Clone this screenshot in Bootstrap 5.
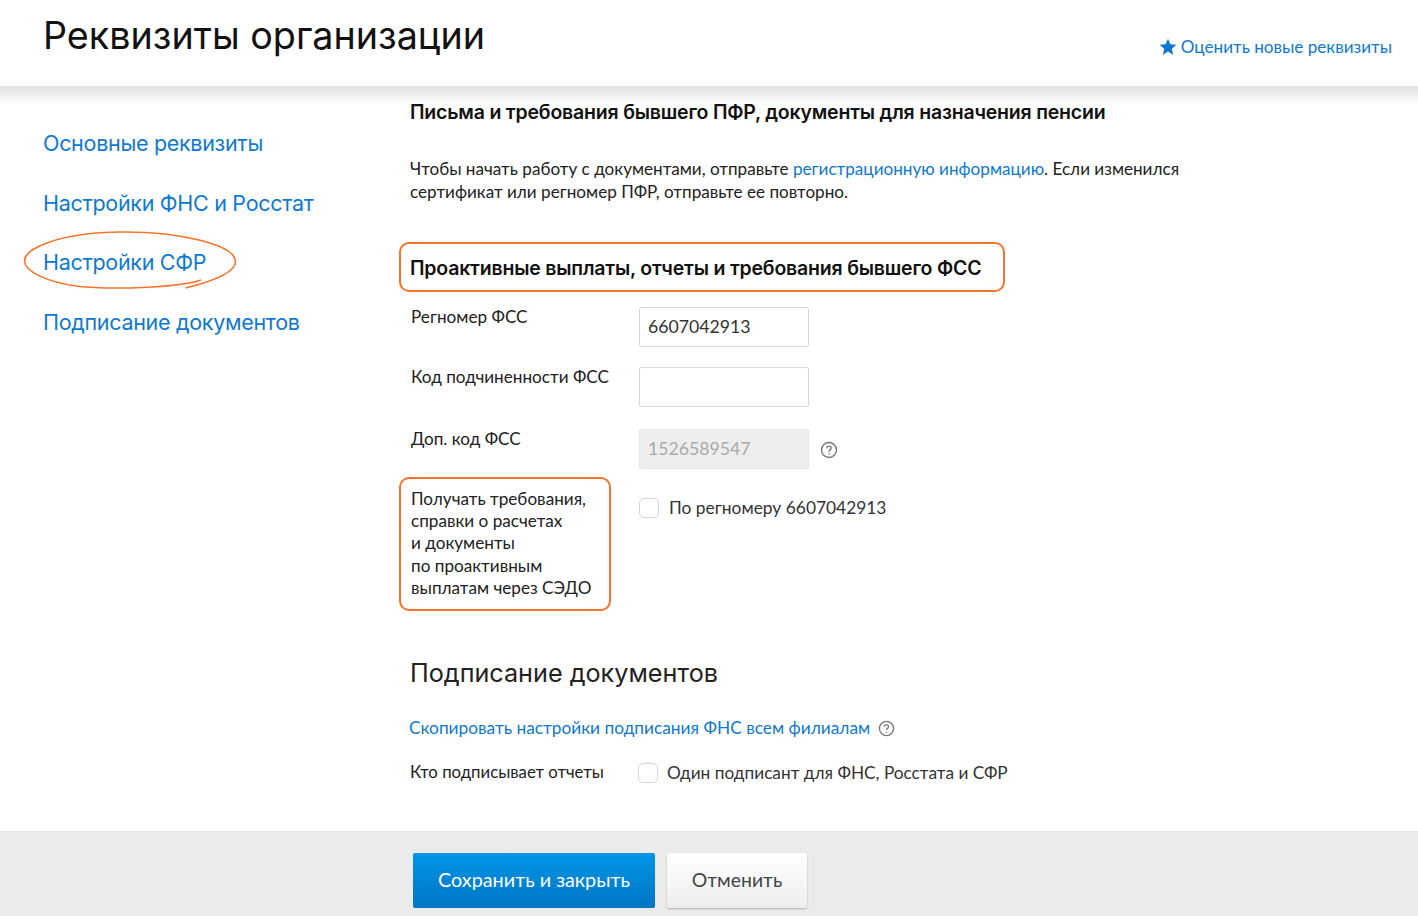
<!DOCTYPE html>
<html lang="ru">
<head>
  <meta charset="UTF-8" />
  <meta name="viewport" content="width=device-width, initial-scale=1.0"/>
  <title>Реквизиты организации</title>
  <link rel="stylesheet" href="https://cdn.jsdelivr.net/npm/bootstrap@5.3.0/dist/css/bootstrap.min.css" />
  <style>
    html, body { height: 916px; overflow: hidden; }
    body { background: #fff; font-family: "Lato", "Noto Sans", sans-serif; color: #222; font-size: 17px; position: relative; }
    a { color: #0f79cf; text-decoration: none; }
    .page-head { height: 86px; padding: 10px 26px 0 43px; position: relative; z-index: 2; }
    .page-head h1 { font-family: "Inter", sans-serif; font-weight: 400; font-size: 37.7px; line-height: 50px; color: #111; margin: 0; }
    .rate-link { font-size: 17.1px; padding-top: 24px; }
    .head-shade { height: 19px; background: linear-gradient(#e2e2e2, #fff); }
    .side-col { width: 410px; padding: 23px 0 0 43px; flex: none; }
    .side-link { display: block; font-family: "Inter", sans-serif; font-size: 21.5px; line-height: 30px; margin-bottom: 29.5px; letter-spacing: -.3px; position: relative; }
    .side-mark { position: absolute; left: -20px; top: -16px; }
    .main-col { width: 800px; margin-top: -6px; }
    .sec-title { font-family: "Inter", sans-serif; font-weight: 600; font-size: 19.5px; line-height: 26px; color: #111; letter-spacing: -.2px; }
    .intro { font-size: 17.13px; line-height: 23px; margin: 32px 0 0; }
    .hl-box { border: 2px solid #f6742b; border-radius: 10px; position: absolute; pointer-events: none; }
    .fss-title { margin-top: 52px; margin-bottom: 26px; position: relative; }
    .fss-title .hl-box { left: -11px; top: -13px; width: 606px; height: 50px; }
    .form-line { display: flex; margin-bottom: 21px; }
    .form-line.first-line { margin-bottom: 20px; }
    .form-line.second-line { margin-bottom: 22px; }
    .form-lbl { width: 229px; flex: none; line-height: 20px; padding-left: 1px; font-size: 17.15px; }
    .val-input { width: 170px; height: 40px; border: 1px solid #d9d9d9; border-radius: 2px; padding: 0 8px 2px; font-size: 17.7px; color: #333; font-family: inherit; background: #fff; }
    .val-input:disabled { background: #eee; color: #aaa; border-color: #e6e6e6; }
    .hint-ic { margin-left: 11px; margin-top: 12px; flex: none; }
    .check-line { display: flex; align-items: center; gap: 10px; font-size: 17.36px; color: #333; line-height: 22px; }
    .check-box { width: 20px; height: 20px; border: 1px solid #d5d5d5; border-radius: 5px; background: #fff; flex: none; }
    .sedo-lbl { line-height: 22.2px; position: relative; margin-top: -2px; }
    .sedo-lbl .hl-box { left: -11px; top: -11px; width: 212px; height: 134px; }
    .sedo-check { padding-top: 7px; }
    .sign-title { font-family: "Inter", sans-serif; font-size: 25.2px; font-weight: 400; line-height: 34px; color: #222; margin: 57px 0 26px; }
    .copy-line { margin-left: -1px; font-size: 17.3px; line-height: 24px; display: flex; }
    .who-line { margin-top: 20px; display: flex; font-size: 16.75px; }
    .who-lbl { width: 228px; flex: none; line-height: 24px; }
    .who-line .check-line { font-size: 17.24px; gap: 9px; padding-top: 2px; }
    .cut-line { margin-top: 41px; font-size: 17px; }
    .page-foot { position: absolute; left: 0; right: 0; bottom: 0; height: 85px; background: #ebebeb; padding: 22px 0 0 413px; gap: 12px; z-index: 3; }
    .btn-save, .btn-undo { height: 55px; border-radius: 2px; padding: 0 0 2px; }
    .btn-save { width: 242px; font-size: 19.8px; color: #fff; background: linear-gradient(#0096e6, #0076c4); border: 0; }
    .btn-undo { width: 140px; font-size: 19.4px; color: #444; background: linear-gradient(#fff, #eee); border: 0; box-shadow: 0 1px 2px rgba(0,0,0,.25); }
  </style>
</head>
<body>
  <header class="page-head d-flex justify-content-between bg-white">
    <h1>Реквизиты организации</h1>
    <a href="#" class="rate-link d-flex align-items-start gap-1">
      <svg width="18" height="18" viewBox="0 0 24 24" class="mt-1" fill="#0f79cf"><path d="M12 1l3.2 7.4 8 .7-6.1 5.3 1.8 7.9L12 18.1l-6.9 4.2 1.8-7.9L.8 9.1l8-.7z"/></svg>
      Оценить новые реквизиты
    </a>
  </header>
  <div class="head-shade"></div>

  <div class="d-flex">
    <!-- left menu -->
    <nav class="side-col">
      <a href="#" class="side-link">Основные реквизиты</a>
      <a href="#" class="side-link">Настройки ФНС и Росстат</a>
      <a href="#" class="side-link">Настройки СФР
        <svg class="side-mark" width="216" height="62" viewBox="0 0 216 62" fill="none" stroke="#f6742b" stroke-width="1.6"><path d="M178 49c-25 8-90 10-125 6C25 51 2 41 1.500 30 1 18 35 1.500 98 1c60-.5 113 13 114.500 29 1 11-22 20-50 27"/></svg>
      </a>
      <a href="#" class="side-link">Подписание документов</a>
    </nav>

    <!-- form -->
    <main class="main-col">
      <div class="sec-title">Письма и требования бывшего ПФР, документы для назначения пенсии</div>
      <p class="intro">Чтобы начать работу с документами, отправьте <a href="#">регистрационную информацию</a>. Если изменился<br>сертификат или регномер ПФР, отправьте ее повторно.</p>

      <div class="sec-title fss-title">Проактивные выплаты, отчеты и требования бывшего ФСС<span class="hl-box"></span></div>

      <div class="form-line first-line">
        <div class="form-lbl">Регномер ФСС</div>
        <input class="val-input" value="6607042913">
      </div>
      <div class="form-line second-line">
        <div class="form-lbl">Код подчиненности ФСС</div>
        <input class="val-input">
      </div>
      <div class="form-line">
        <div class="form-lbl">Доп. код ФСС</div>
        <input class="val-input" value="1526589547" disabled>
        <svg class="hint-ic" width="18" height="18" viewBox="0 0 18 18" fill="none" stroke="#777" stroke-width="1.400"><circle cx="9" cy="9" r="7.500"/><path d="M6.800 7.200c0-1.300 1-2.100 2.200-2.100s2.200.8 2.200 2c0 1.800-2.200 1.700-2.200 3.600"/><path d="M9 12.200v1.400"/></svg>
      </div>
      <div class="form-line">
        <div class="form-lbl sedo-lbl">Получать требования,<br>справки о расчетах<br>и документы<br>по проактивным<br>выплатам через СЭДО<span class="hl-box"></span></div>
        <label class="check-line align-self-start sedo-check"><span class="check-box"></span>По регномеру 6607042913</label>
      </div>

      <h2 class="sign-title">Подписание документов</h2>
      <div class="copy-line"><a href="#">Скопировать настройки подписания ФНС всем филиалам</a>
        <svg class="ms-2 mt-1" width="17" height="17" viewBox="0 0 18 18" fill="none" stroke="#777" stroke-width="1.400"><circle cx="9" cy="9" r="7.500"/><path d="M6.800 7.200c0-1.300 1-2.100 2.200-2.100s2.200.8 2.200 2c0 1.800-2.200 1.700-2.200 3.600"/><path d="M9 12.200v1.400"/></svg>
      </div>
      <div class="who-line">
        <div class="who-lbl">Кто подписывает отчеты</div>
        <label class="check-line"><span class="check-box"></span>Один подписант для ФНС, Росстата и СФР</label>
      </div>
      <div class="cut-line">Подписант для ФНС и Росстата</div>
    </main>
  </div>

  <footer class="page-foot d-flex">
    <button class="btn btn-save">Сохранить и закрыть</button>
    <button class="btn btn-undo">Отменить</button>
  </footer>
<script src="https://cdn.jsdelivr.net/npm/bootstrap@5.3.0/dist/js/bootstrap.bundle.min.js"></script>
</body>
</html>
